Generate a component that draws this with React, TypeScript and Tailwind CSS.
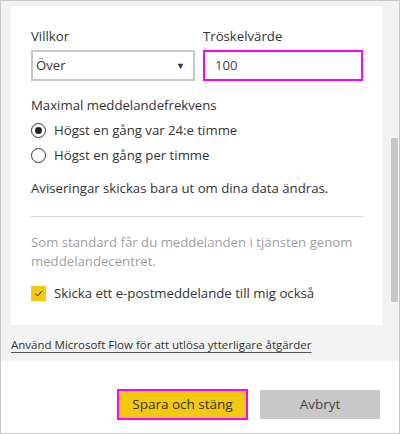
export default function App() {
  return (
    <div
      className="w-[400px] h-[434px] border border-[#c8c8c8] bg-white flex flex-col overflow-hidden text-[13.2px] text-[#333]"
      style={{ fontFamily: '"Open Sans", "Noto Sans", sans-serif' }}
    >
      {/* scroll area */}
      <div className="h-[360px] bg-[#f2f2f2] flex shrink-0">
        <div className="flex-1 pl-[10px] pt-[5px]">
          <div className="bg-white w-[371px] h-[319px] pl-[20px] pr-[19px] pt-[20px]">
            <div className="flex gap-[8px]">
              <div className="w-[164px]">
                <div className="h-[21px] leading-[21px]">Villkor</div>
                <div className="mt-[3px] h-[31px] border-2 border-[#c8c8c8] flex items-center justify-between pl-[3px] pr-[8px]">
                  <span>Över</span>
                  <span className="text-[9px]">▼</span>
                </div>
              </div>
              <div className="flex-1">
                <div className="h-[21px] leading-[21px]">Tröskelvärde</div>
                <div className="mt-[3px] h-[31px] border-2 border-[#ff00ff] flex items-center pl-[10px] text-[#444]">
                  100
                </div>
              </div>
            </div>
            <div className="mt-[14px] leading-[21px]">Maximal meddelandefrekvens</div>
            <div className="mt-[4px] flex items-center h-[21px] gap-[8px]">
              <span className="w-[15px] h-[15px] rounded-full border border-[#333] flex items-center justify-center">
                <span className="w-[7px] h-[7px] rounded-full bg-[#222]" />
              </span>
              <span>Högst en gång var 24:e timme</span>
            </div>
            <div className="mt-[4px] flex items-center h-[21px] gap-[8px]">
              <span className="w-[15px] h-[15px] rounded-full border border-[#333]" />
              <span>Högst en gång per timme</span>
            </div>
            <div className="mt-[12px] leading-[21px]">Aviseringar skickas bara ut om dina data ändras.</div>
            <div className="mt-[17px] border-t border-[#d6d6d6]" />
            <div className="mt-[16px] leading-[19px] text-[#a0a0a0]">
              Som standard får du meddelanden i tjänsten genom meddelandecentret.
            </div>
            <div className="mt-[12px] flex items-center h-[21px] gap-[8px]">
              <span className="w-[15px] h-[15px] bg-[#f2c811] flex items-center justify-center">
                <svg width="9" height="7" viewBox="0 0 9 7" fill="none">
                  <path d="M1 3.5 L3.5 6 L8 1" stroke="#333" strokeWidth="1" />
                </svg>
              </span>
              <span>Skicka ett e-postmeddelande till mig också</span>
            </div>
          </div>
          <div className="mt-[10px]">
            <span className="underline underline-offset-[3px] decoration-[#555] text-[11.5px] text-[#333]">
              Använd Microsoft Flow för att utlösa ytterligare åtgärder
            </span>
          </div>
        </div>
        {/* scrollbar */}
        <div className="w-[7px] mr-[1px] flex flex-col">
          <div className="h-[137px]" />
          <div className="h-[164px] bg-[#c8c8c8]" />
        </div>
      </div>
      <div className="flex justify-end gap-[12px] pr-[19px] pt-[28px]">
        <button className="w-[131px] h-[31px] bg-[#f2c811] border-2 border-[#ff00ff] text-[#333] text-[13.5px]">
          Spara och stäng
        </button>
        <button className="w-[120px] h-[29px] mt-[1px] bg-[#c8c8c8] text-[#444] text-[13.5px]">
          Avbryt
        </button>
      </div>
    </div>
  );
}
